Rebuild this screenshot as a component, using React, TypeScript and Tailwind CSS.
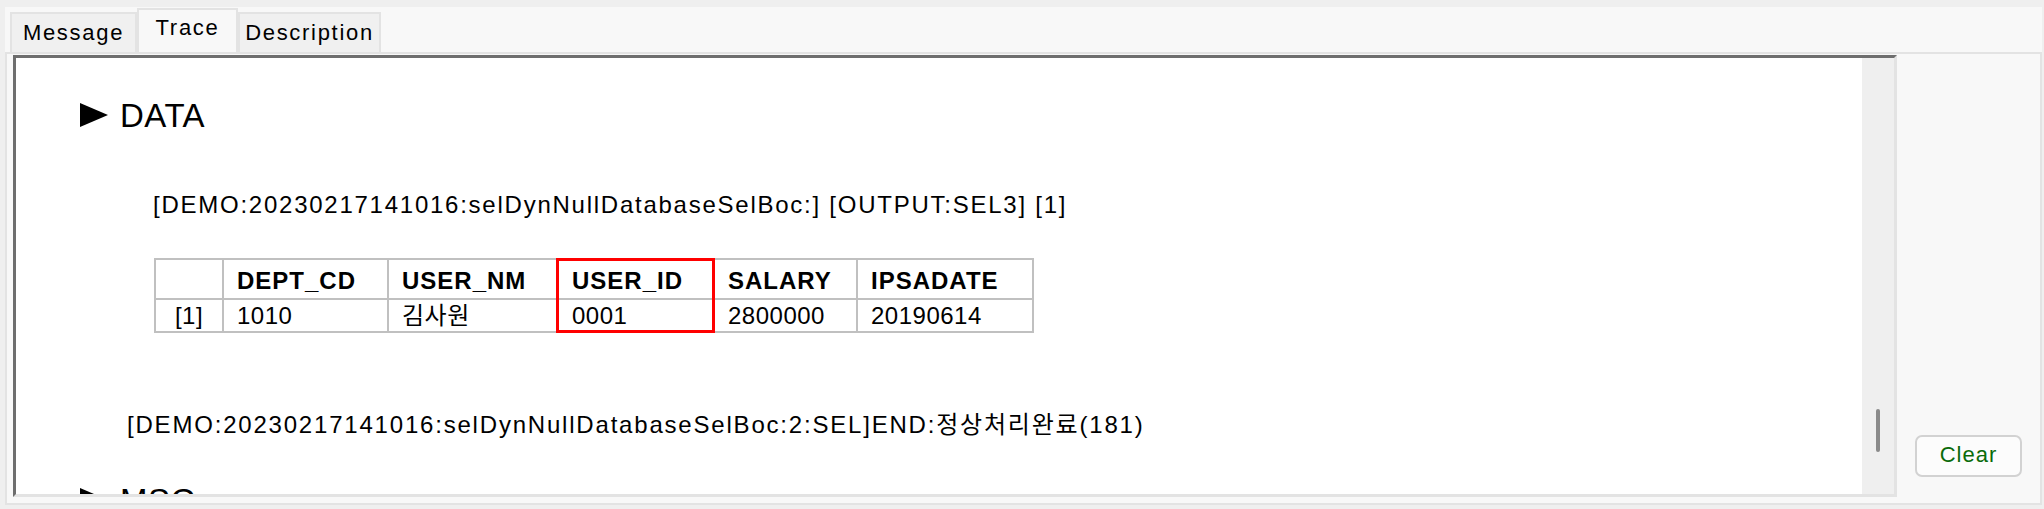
const TAB_BASE =
  "flex items-center justify-center border-t-2 border-l-2 border-r-2 border-[#e3e3e3] text-[22px] tracking-[1.7px] leading-none";

const HEADERS = ["", "DEPT_CD", "USER_NM", "USER_ID", "SALARY", "IPSADATE"];
const ROW = ["[1]", "1010", "김사원", "0001", "2800000", "20190614"];
const COLS = ["col-start-1", "col-start-2", "col-start-3", "col-start-4", "col-start-5", "col-start-6"];

function Triangle() {
  return (
    <svg width="28" height="24" viewBox="0 0 28 24" className="mt-[4px] shrink-0">
      <polygon points="0,0 28,12 0,24" fill="#000" />
    </svg>
  );
}

function Section({ title }: { title: string }) {
  return (
    <div className="flex items-start gap-[12px] ml-[64px]">
      <Triangle />
      <span className="text-[33px] leading-none tracking-[0.5px]">{title}</span>
    </div>
  );
}

function ResultTable() {
  return (
    <div className="ml-[138px] mt-[41px] w-fit grid grid-cols-[68px_165px_170px_156px_143px_176px] grid-rows-[40px_33px] border-t-2 border-l-2 border-[#c0c0c0]">
      {HEADERS.map((h, i) => (
        <div
          key={"h" + i}
          className={
            COLS[i] +
            " row-start-1 flex items-center pl-[13px] pt-[3px] border-r-2 border-b-2 border-[#c0c0c0] text-[24px] font-bold tracking-[1px] leading-none"
          }
        >
          {h}
        </div>
      ))}
      {ROW.map((c, i) => (
        <div
          key={"r" + i}
          className={
            COLS[i] +
            " row-start-2 flex items-center border-r-2 border-b-2 border-[#c0c0c0] text-[24px] tracking-[0.5px] leading-none " +
            (i === 0 ? "justify-center" : "pl-[13px]")
          }
        >
          {c}
        </div>
      ))}
      {/* highlighted column */}
      <div className="col-start-4 row-start-1 row-span-2 -ml-[3px] -mt-[2px] border-[3px] border-[#ff0000]" />
    </div>
  );
}

export default function App() {
  return (
    <div className="w-[2044px] h-[509px] overflow-hidden bg-[#efefef] text-black font-['Liberation_Sans','Noto_Sans_CJK_KR',sans-serif]">
      <div className="ml-[5px] mt-[7px] w-[2037px] h-[498px] bg-[#f8f8f8] flex flex-col">
        {/* tabs */}
        <div className="flex items-end h-[45px] pl-[5px] shrink-0">
          <div className={TAB_BASE + " w-[127px] h-[40px] bg-[#f0f0f0]"}>Message</div>
          <div className={TAB_BASE + " w-[101px] h-[44px] bg-[#f8f8f8] pb-[7px]"}>Trace</div>
          <div className={TAB_BASE + " w-[143px] h-[40px] bg-[#f0f0f0]"}>Description</div>
        </div>

        {/* body */}
        <div className="flex flex-1 min-h-0 border-2 border-[#e3e3e3] pt-[1px] pl-[6px] pb-[6px]">
          {/* trace panel */}
          <div className="flex w-[1884px] border-t-[3px] border-l-[3px] border-r-[3px] border-b-[3px] border-t-[#6e6e6e] border-l-[#6e6e6e] border-r-[#e3e3e3] border-b-[#e3e3e3]">
            <div className="flex-1 bg-white overflow-hidden flex flex-col">
              <div className="mt-[41px]">
                <Section title="DATA" />
              </div>
              <div className="ml-[137px] mt-[61px] text-[24px] leading-none tracking-[1.75px] whitespace-nowrap">
                [DEMO:20230217141016:selDynNullDatabaseSelBoc:] [OUTPUT:SEL3] [1]
              </div>
              <ResultTable />
              <div className="ml-[111px] mt-[80px] text-[24px] leading-none tracking-[1.8px] whitespace-nowrap">
                [DEMO:20230217141016:selDynNullDatabaseSelBoc:2:SEL]END:정상처리완료(181)
              </div>
              <div className="mt-[47px]">
                <Section title="MSG" />
              </div>
            </div>
            {/* scrollbar */}
            <div className="w-[32px] bg-[#efefef] flex flex-col items-center pt-[351px]">
              <div className="w-[4px] h-[43px] rounded-full bg-[#8a8a8a]" />
            </div>
          </div>

          {/* side panel */}
          <div className="flex-1 flex items-end justify-center pb-[20px]">
            <button className="w-[107px] h-[42px] rounded-[7px] border-2 border-[#d2d2d2] bg-[#fcfcfc] text-[#0a6b0a] text-[22px] tracking-[1px] leading-none pb-[2px]">
              Clear
            </button>
          </div>
        </div>
      </div>
    </div>
  );
}
